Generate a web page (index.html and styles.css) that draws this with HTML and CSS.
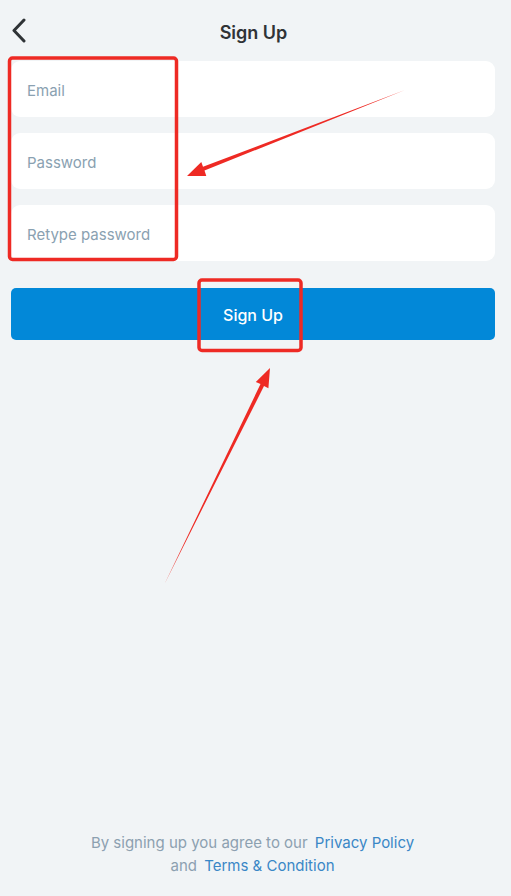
FILE: index.html
```html
<html>
<head>
  <title>Sign Up</title>
  <link rel="stylesheet" href="styles.css">
</head>
<body>
  <div class="page">
    <div class="header">
      <svg class="back" width="20" height="28" viewBox="0 0 20 28">
        <polyline points="13,2 3,12.5 13,23" fill="none" stroke="#2f3336" stroke-width="3" stroke-linecap="round" stroke-linejoin="round"/>
      </svg>
      <div class="title">Sign Up</div>
    </div>

    <div class="fields">
      <input class="field" type="text" placeholder="Email">
      <input class="field" type="password" placeholder="Password">
      <input class="field" type="password" placeholder="Retype password">
    </div>

    <button class="submit">Sign Up</button>

    <div class="footer">
      <div>By signing up you agree to our <span class="link">Privacy Policy</span></div>
      <div>and <span class="link">Terms &amp; Condition</span></div>
    </div>

    <svg class="marks" width="511" height="896" viewBox="0 0 511 896">
      <rect x="9.5" y="58" width="167" height="201.5" rx="3" fill="none" stroke="#ee2a24" stroke-width="3.5"/>
      <rect x="199" y="280" width="102" height="70.5" rx="3" fill="none" stroke="#ee2a24" stroke-width="3.5"/>
      <polygon fill="#ee2a24" points="405,90 204.5,170.5 206.3,176 187,176 201.3,162 203,166.8"/>
      <polygon fill="#ee2a24" points="165,583 260.5,384 255.8,382 270,368 268.4,388.3 264,386"/>
    </svg>
  </div>
</body>
</html>
```

FILE: styles.css
```css
body {
    margin: 0;
    background-color: #f1f4f6;
    font-family: Inter, "Liberation Sans", sans-serif;
}

.page {
    position: relative;
    width: 511px;
    min-height: 896px;
    display: flex;
    flex-direction: column;
    box-sizing: border-box;
}

.header {
    position: relative;
    height: 61px;
    padding-top: 4px;
    padding-right: 4px;
    box-sizing: border-box;
    display: flex;
    align-items: center;
    justify-content: center;
}

.back {
    position: absolute;
    left: 11px;
    top: 18px;
}

.title {
    font-size: 18px;
    font-weight: 600;
    color: #2f3336;
}

.fields {
    display: flex;
    flex-direction: column;
    gap: 16px;
    margin: 0 16px 0 11px;
}

.field {
    height: 56px;
    border: none;
    border-radius: 9px;
    background-color: #ffffff;
    padding: 2px 16px 0 16px;
    font-family: Inter, "Liberation Sans", sans-serif;
    font-size: 15px;
    color: #333;
    outline: none;
}

.field::placeholder {
    color: #8aa1b1;
}

.submit {
    margin: 27px 16px 0 11px;
    height: 52px;
    padding-top: 2px;
    border: none;
    border-radius: 5px;
    background-color: #0288d8;
    color: #ffffff;
    font-family: Inter, "Liberation Sans", sans-serif;
    font-size: 16px;
    font-weight: 500;
}

.footer {
    margin-top: auto;
    padding-bottom: 19px;
    padding-right: 6px;
    text-align: center;
    font-size: 15px;
    line-height: 23px;
    color: #8ca0b0;
}

.link {
    color: #3a87c6;
    margin-left: 3px;
}

.marks {
    position: absolute;
    left: 0;
    top: 0;
    pointer-events: none;
}
```
